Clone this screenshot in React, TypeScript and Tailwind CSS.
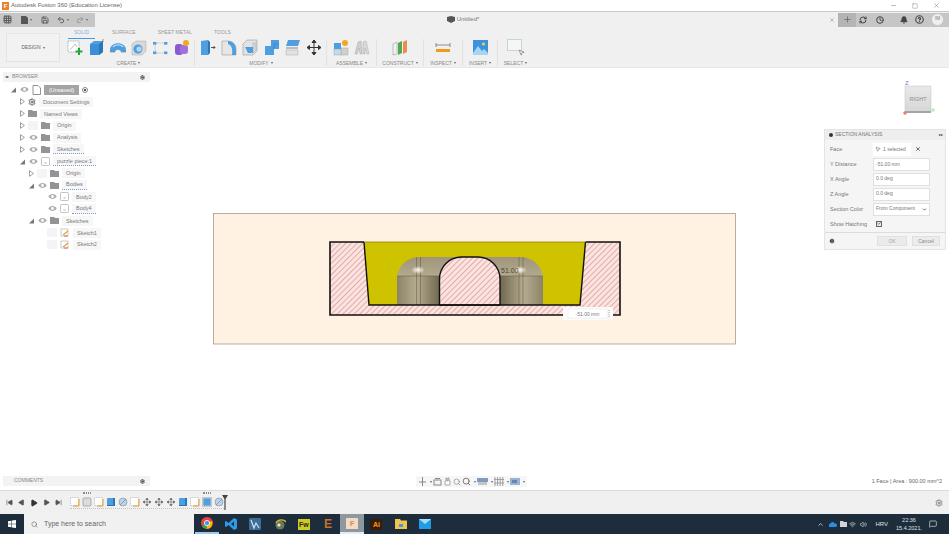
import { ChevronDown, Bell, HelpCircle, Grid3x3, Save, Undo2, Redo2, Plus, RefreshCw, Clock, Search, Wifi, Volume2, MessageSquare, ChevronUp, X, Minus, Square, Settings, SkipBack, SkipForward, Play, Info, MousePointer2, Check } from "lucide-react";

const BLUE = "#4f9fe0";

function Caret() {
  return <span className="ml-[2px] inline-block h-0 w-0 border-x-[1.5px] border-t-[2px] border-x-transparent border-t-[#666]" />;
}

function Glyph({ kind }: { kind: string }) {
  return (
    <svg width="16" height="17" viewBox="0 0 16 17" className="shrink-0">
      {kind === "sketch" && (
        <>
          <rect x="1" y="2" width="11" height="11" fill="#fff" stroke="#777" strokeWidth="0.6" strokeDasharray="1 0.7" />
          <path d="M3 11 L8 5 L10 8" fill="none" stroke="#999" strokeWidth="0.6" />
          <path d="M12 9v7M8.5 12.5h7" stroke="#22a83a" strokeWidth="2" />
        </>
      )}
      {kind === "extrude" && (
        <>
          <path d="M1 5 L5 2 L14 2 L14 13 L10 16 L1 16Z" fill={BLUE} />
          <path d="M1 5 L10 5 L10 16 L1 16Z" fill="#3b8fd6" />
          <path d="M10 5 L14 2 L14 13 L10 16Z" fill="#2a76b8" />
          <path d="M14 0v3" stroke="#555" strokeWidth="0.6" />
        </>
      )}
      {kind === "revolve" && (
        <>
          <path d="M0 11 C0 2 16 2 16 11 L16 13 L11 13 C10 10 6 10 5 13 L0 13Z" fill={BLUE} />
          <path d="M3 8 C5 5 11 5 13 8" fill="none" stroke="#d7ecfa" strokeWidth="1.2" />
          <path d="M0 13h5M11 13h5" stroke="#777" strokeWidth="0.6" />
        </>
      )}
      {kind === "hole" && (
        <>
          <path d="M1 5 L5 2 L15 2 L15 12 L11 16 L1 16Z" fill="#d8d8d8" stroke="#999" strokeWidth="0.4" />
          <circle cx="7" cy="10" r="4.5" fill={BLUE} />
          <circle cx="8" cy="10" r="2.6" fill="#b7d6ee" />
        </>
      )}
      {kind === "pattern" && (
        <>
          <path d="M3 4h10M3 14h10M3 4v10" stroke="#999" strokeWidth="0.6" strokeDasharray="1.2 1" fill="none" />
          <rect x="1" y="3" width="3.4" height="2.6" fill={BLUE} />
          <rect x="12" y="3" width="3.4" height="2.6" fill={BLUE} />
          <rect x="1" y="12.5" width="3.4" height="2.6" fill={BLUE} />
          <rect x="12" y="12.5" width="3.4" height="2.6" fill={BLUE} />
        </>
      )}
      {kind === "combine" && (
        <>
          <rect x="1" y="5" width="8" height="11" rx="3" fill="#8a5bd0" />
          <rect x="6" y="6" width="8" height="9" rx="3" fill="#a070dc" />
          <circle cx="12" cy="4" r="3" fill="#f5a623" />
        </>
      )}
      {kind === "press" && (
        <>
          <path d="M1 2 L8 1 L8 16 L1 16Z" fill={BLUE} />
          <path d="M8 1 L10 3 L10 14 L8 16Z" fill="#2a76b8" />
          <path d="M11 8.5h4M13.5 7l1.5 1.5-1.5 1.5" stroke="#444" strokeWidth="0.9" fill="none" />
        </>
      )}
      {kind === "fillet" && (
        <>
          <path d="M1 2 L7 2 C12 2 15 6 15 10 L15 16 L1 16Z" fill="#e6e6e6" stroke="#888" strokeWidth="0.5" />
          <path d="M7 2 C12 2 15 6 15 10 L15 16 L11 16 C12 9 10 6 7 5Z" fill={BLUE} />
        </>
      )}
      {kind === "chamfer" && (
        <>
          <path d="M1 5 L5 1 L15 1 L15 12 L11 16 L1 16Z" fill="#e2e2e2" stroke="#888" strokeWidth="0.5" />
          <path d="M3 8h8v6H6Z" fill={BLUE} />
          <path d="M11 4h3v7l-3 3Z" fill="#cfd8e0" stroke="#999" strokeWidth="0.4" />
        </>
      )}
      {kind === "combine2" && (
        <>
          <path d="M7 1h8v9h-5v6H1V7h6Z" fill={BLUE} />
          <path d="M10 10V5h5" fill="none" stroke="#2a76b8" strokeWidth="0.5" />
        </>
      )}
      {kind === "offset" && (
        <>
          <path d="M3 1h12l-2 6H1Z" fill={BLUE} />
          <path d="M1 8h12v2H1Z" fill="#bbb" />
          <path d="M1 11h12v5H1Z" fill="#e2e2e2" stroke="#999" strokeWidth="0.4" />
        </>
      )}
      {kind === "move" && (
        <path d="M8 1v15M1 8.5h14M8 1 6 3.5h4ZM8 16l-2-2.5h4ZM1 8.5 3.5 6.5v4ZM15 8.5l-2.5-2v4Z" stroke="#333" strokeWidth="1" fill="#333" />
      )}
      {kind === "assemble" && (
        <>
          <rect x="1" y="4" width="7" height="6" fill={BLUE} />
          <rect x="8" y="9" width="7" height="7" fill="#d0d0d0" stroke="#999" strokeWidth="0.4" />
          <rect x="1" y="10" width="7" height="6" fill="#c4d8e8" stroke="#999" strokeWidth="0.4" />
          <circle cx="12" cy="4" r="3" fill="#f5a623" />
        </>
      )}
      {kind === "joint" && (
        <>
          <path d="M1 15 L4 3 L7 2 L8 15 L6 15 L5 9 L3 15Z" fill="#cfcfcf" stroke="#999" strokeWidth="0.4" />
          <path d="M9 15 L9 3 L12 2 L15 15 L13 15 L11 9 L11 15Z" fill="#dadada" stroke="#999" strokeWidth="0.4" />
        </>
      )}
      {kind === "construct" && (
        <>
          <path d="M1 5 L5 3 L5 15 L1 16Z" fill="#f1f1f1" stroke="#888" strokeWidth="0.5" />
          <path d="M6 4 L10 2 L10 14 L6 16Z" fill="#55a84f" />
          <path d="M11 3 L15 1 L15 13 L11 15Z" fill="#ea8c55" />
        </>
      )}
      {kind === "inspect" && (
        <>
          <path d="M1 6h14" stroke="#666" strokeWidth="0.7" />
          <path d="M1 4v4M15 4v4" stroke="#666" strokeWidth="0.7" />
          <rect x="1" y="10" width="14" height="3" fill="#f09a1a" />
        </>
      )}
      {kind === "insert" && (
        <>
          <rect x="1" y="1" width="15" height="15" fill="#3b93dc" />
          <circle cx="11.5" cy="5" r="1.6" fill="#f4c95d" />
          <path d="M1 14 L6 7 L10 12 L12 10 L16 14 L16 16 L1 16Z" fill="#a9d4f2" />
        </>
      )}
    </svg>
  );
}

function RibbonGroup({ icons, label, wide, divider = true }: { icons: string[]; label: string; wide: string; divider?: boolean }) {
  return (
    <div className={`flex h-[27px] flex-col items-center justify-between ${wide} ${divider ? "border-r border-[#e2e2e2]" : ""}`}>
      <div className="flex gap-[5.3px]">
        {icons.map((k, i) => (
          <Glyph key={i} kind={k} />
        ))}
      </div>
      <div className="flex items-center text-[5px] leading-[6px] text-[#8a8a8a]">
        {label}
        <Caret />
      </div>
    </div>
  );
}

function EyeOn() {
  return (
    <svg width="9" height="7" viewBox="0 0 9 7" className="shrink-0">
      <path d="M0.3 3.5 C2.5 0.3 6.5 0.3 8.7 3.5 C6.5 6.7 2.5 6.7 0.3 3.5Z" fill="#adadad" />
      <circle cx="4.5" cy="3.5" r="1.4" fill="#fff" />
    </svg>
  );
}

function RowIcon({ kind }: { kind: string }) {
  if (kind === "gear") return <Settings size={8} strokeWidth={3} color="#666" className="shrink-0" />;
  if (kind === "folder")
    return (
      <svg width="9" height="7" viewBox="0 0 9 7" className="shrink-0">
        <path d="M0 0h4l1 1h4v6H0Z" fill="#949494" />
      </svg>
    );
  if (kind === "doc")
    return (
      <svg width="9" height="10" viewBox="0 0 9 10" className="shrink-0">
        <path d="M1 .5h5l2.5 2.5v6.5H1Z" fill="#fff" stroke="#777" strokeWidth="0.8" />
      </svg>
    );
  if (kind === "sketch")
    return (
      <svg width="10" height="9" viewBox="0 0 10 9" className="shrink-0">
        <rect x="1" y="1" width="7" height="7" fill="#fff" stroke="#aaa" strokeWidth="0.6" />
        <path d="M3 7 L8 3" stroke="#ee9a2e" strokeWidth="1.2" />
        <path d="M4 8h4" stroke="#dd4433" strokeWidth="0.8" />
      </svg>
    );
  return (
    <svg width="9" height="9" viewBox="0 0 9 9" className="shrink-0">
      <rect x=".5" y=".5" width="8" height="8" rx="1" fill="#fff" stroke="#aaa" strokeWidth="0.7" />
      <path d="M3.5 6h2" stroke="#888" strokeWidth="0.7" />
    </svg>
  );
}

type Row = { level: number; tri?: "open" | "filled"; eye?: "on" | "off"; icon: string; label: string; dotted?: boolean; root?: boolean };

const ROWS: Row[] = [
  { level: 11, tri: "filled", eye: "on", icon: "doc", label: "(Unsaved)", root: true },
  { level: 20, tri: "open", icon: "gear", label: "Document Settings" },
  { level: 20, tri: "open", icon: "folder", label: "Named Views" },
  { level: 20, tri: "open", eye: "off", icon: "folder", label: "Origin" },
  { level: 20, tri: "open", eye: "on", icon: "folder", label: "Analysis" },
  { level: 20, tri: "open", eye: "on", icon: "folder", label: "Sketches", dotted: true },
  { level: 20, tri: "filled", eye: "on", icon: "box", label: "puzzle piece:1", dotted: true },
  { level: 29, tri: "open", eye: "off", icon: "folder", label: "Origin" },
  { level: 29, tri: "filled", eye: "on", icon: "folder", label: "Bodies", dotted: true },
  { level: 47, eye: "on", icon: "box", label: "Body2" },
  { level: 47, eye: "on", icon: "box", label: "Body4", dotted: true },
  { level: 29, tri: "filled", eye: "on", icon: "folder", label: "Sketches" },
  { level: 47, eye: "off", icon: "sketch", label: "Sketch1" },
  { level: 47, eye: "off", icon: "sketch", label: "Sketch2" },
];

function TreeRow({ row }: { row: Row }) {
  return (
    <div className="flex h-[11.9px] items-center gap-[3px]" style={{ paddingLeft: row.level }}>
      {row.tri === "open" && (
        <svg width="5" height="7" viewBox="0 0 5 7" className="shrink-0">
          <path d="M.5.7 4.4 3.5.5 6.3Z" fill="#fff" stroke="#777" strokeWidth="0.7" />
        </svg>
      )}
      {row.tri === "filled" && (
        <svg width="5" height="7" viewBox="0 0 5 7" className="shrink-0">
          <path d="M5 1.5V6.5H0Z" fill="#777" />
        </svg>
      )}
      {row.eye === "on" && (
        <span className="flex w-[10px] shrink-0 justify-center">
          <EyeOn />
        </span>
      )}
      {row.eye === "off" && <span className="h-[9px] w-[10px] shrink-0 bg-[#f4f4f4]" />}
      <RowIcon kind={row.icon} />
      <span
        className={`flex h-[10px] items-center whitespace-nowrap px-[4px] text-[5.5px] ${
          row.root ? "bg-[#a4a4a4] px-[5px] text-white" : "bg-[#f7f7f7] text-[#777]"
        } ${row.dotted ? "border-b border-dotted border-[#7f9bdc]" : ""}`}
      >
        {row.label}
      </span>
      {row.root && <span className="h-[6px] w-[6px] rounded-full border border-[#888] bg-[radial-gradient(circle,#555_30%,#fff_35%)]" />}
    </div>
  );
}

function FieldRow({ label, children }: { label: string; children: React.ReactNode }) {
  return (
    <div className="flex h-[14.9px] items-center">
      <span className="w-[43px] whitespace-nowrap text-[5.5px] text-[#777]">{label}</span>
      {children}
    </div>
  );
}

function Input({ value }: { value: string }) {
  return <div className="flex h-[13px] w-[57px] items-center border border-[#e0e0e0] bg-white px-[2px] text-[5px] text-[#777]">{value}</div>;
}

function Model() {
  return (
    <svg viewBox="213 213 523 132" className="h-[132px] w-[523px]">
      <defs>
        <pattern id="hatch" width="4" height="4" patternUnits="userSpaceOnUse" patternTransform="rotate(-45)">
          <rect width="4" height="4" fill="#fbe4df" />
          <rect width="4" height="1" fill="#e3abab" />
        </pattern>
        <linearGradient id="metalL" x1="0" x2="1" y1="0" y2="0">
          <stop offset="0" stopColor="#8d8468" />
          <stop offset="0.45" stopColor="#b5ab90" />
          <stop offset="1" stopColor="#6f674f" />
        </linearGradient>
        <linearGradient id="metalR" x1="0" x2="1" y1="0" y2="0">
          <stop offset="0" stopColor="#6f674f" />
          <stop offset="0.55" stopColor="#b5ab90" />
          <stop offset="1" stopColor="#8d8468" />
        </linearGradient>
        <linearGradient id="metalT" x1="0" x2="0" y1="0" y2="1">
          <stop offset="0" stopColor="#a0957a" />
          <stop offset="1" stopColor="#cfc7ae" />
        </linearGradient>
        <radialGradient id="shine">
          <stop offset="0" stopColor="#fffdf0" />
          <stop offset="1" stopColor="#fffdf0" stopOpacity="0" />
        </radialGradient>
      </defs>
      <rect x="213.5" y="213.5" width="522" height="130.5" fill="#fff2e2" stroke="#a89c90" strokeWidth="0.8" />
      <path d="M330 242 H364 L369 305 H580 L585.5 242 H620 V315 H330 Z" fill="url(#hatch)" />
      <path d="M364 242 H585.5 L580 305 H369 Z" fill="#cfc300" />
      <path d="M397 305 V279 A22 22 0 0 1 419 257 H521 A22 22 0 0 1 543 279 V305 Z" fill="url(#metalT)" />
      <rect x="397" y="276" width="43" height="29" fill="url(#metalL)" />
      <rect x="500" y="276" width="43" height="29" fill="url(#metalR)" />
      <path d="M397 276 H440 M500 276 H543 M416.5 257 V305 M420.5 257 V305 M519 257 V305 M523 257 V305" stroke="#5c5440" strokeWidth="0.5" />
      <ellipse cx="418" cy="270" rx="7" ry="4" fill="url(#shine)" />
      <ellipse cx="520" cy="270" rx="7" ry="4" fill="url(#shine)" />
      <text x="501" y="273" fontSize="7" fill="#4a4636" fontFamily="Liberation Sans">51.00</text>
      <path d="M439.5 305 V279 A22 22 0 0 1 461.5 257 H478 A22 22 0 0 1 500 279 V305 Z" fill="url(#hatch)" stroke="#111" strokeWidth="1.4" />
      <path d="M364 242 L369 305 H580 L585.5 242" fill="none" stroke="#111" strokeWidth="1.4" />
      <path d="M364 242 H330 V315 H620 V242 H585.5" fill="none" stroke="#111" strokeWidth="1.6" />
      <path d="M364 242 H585.5" stroke="#7d7600" strokeWidth="0.7" />
      <rect x="563" y="307" width="50" height="13" fill="#fbfbfb" />
      <rect x="568" y="309" width="39" height="9" fill="#fff" stroke="#e4e4e4" strokeWidth="0.5" />
      <text x="587.5" y="315.5" fontSize="5" fill="#777" textAnchor="middle" fontFamily="Liberation Sans">-51.00 mm</text>
      <path d="M609 310v7" stroke="#888" strokeWidth="0.8" strokeDasharray="1 1" />
    </svg>
  );
}

function ViewCube() {
  return (
    <svg width="40" height="38" viewBox="0 0 40 38">
      <defs>
        <linearGradient id="cube" x1="0" x2="0" y1="0" y2="1">
          <stop offset="0" stopColor="#e9e9e9" />
          <stop offset="1" stopColor="#d6d6d6" />
        </linearGradient>
      </defs>
      <text x="3" y="5" fontSize="6" fill="#7a7ae8" fontFamily="Liberation Sans">Z</text>
      <rect x="3" y="6" width="26" height="26" fill="url(#cube)" stroke="#c4c4c4" strokeWidth="0.5" />
      <rect x="3" y="31" width="26" height="2" fill="#a4a4a4" />
      <text x="16" y="21" fontSize="5.5" fill="#8f8f8f" textAnchor="middle" fontFamily="Liberation Sans">RIGHT</text>
      <circle cx="3" cy="33" r="1.8" fill="#f47a7a" />
      <circle cx="31" cy="30" r="1.8" fill="#b4ecb4" />
    </svg>
  );
}

function TimelineItem({ kind }: { kind: string }) {
  if (kind === "sketch")
    return (
      <svg width="10" height="10" viewBox="0 0 10 10">
        <rect x=".5" y=".5" width="8" height="8" fill="#fff" stroke="#999" strokeWidth="0.5" strokeDasharray="1 .6" />
        <path d="M9 2v7H3" fill="none" stroke="#ee9a2e" strokeWidth="1" />
      </svg>
    );
  if (kind === "gray")
    return (
      <svg width="10" height="10" viewBox="0 0 10 10">
        <rect x="1" y="1" width="8" height="8" rx="1" fill="#dcdcdc" stroke="#888" strokeWidth="0.6" />
      </svg>
    );
  if (kind === "solid")
    return (
      <svg width="10" height="10" viewBox="0 0 10 10">
        <rect x="1" y="1" width="8" height="8" rx="1" fill={BLUE} />
        <path d="M7 1h2v8H1V8h6Z" fill="#2a76b8" />
      </svg>
    );
  if (kind === "round")
    return (
      <svg width="10" height="10" viewBox="0 0 10 10">
        <circle cx="5" cy="5" r="4" fill="#b9d6ee" stroke="#777" strokeWidth="0.5" />
        <path d="M2 8 8 2" stroke="#777" strokeWidth="0.6" />
      </svg>
    );
  if (kind === "move")
    return (
      <svg width="10" height="10" viewBox="0 0 10 10">
        <path d="M5 1v8M1 5h8M5 1 3.8 2.6h2.4ZM5 9 3.8 7.4h2.4ZM1 5l1.6-1.2v2.4ZM9 5 7.4 3.8v2.4Z" stroke="#666" strokeWidth="0.6" fill="#666" />
      </svg>
    );
  return (
    <svg width="10" height="10" viewBox="0 0 10 10">
      <rect width="10" height="10" fill="#c2c8ce" />
      <rect x="1.5" y="1.5" width="7" height="7" fill={BLUE} />
    </svg>
  );
}

const TIMELINE = ["sketch", "gray", "sketch", "solid", "round", "sketch", "move", "move", "move", "solid", "sketch", "selected", "round"];

function NavIcons() {
  return (
    <div className="flex h-[11px] items-center gap-[1px] bg-[#f6f6f6] px-[2px]">
      <svg width="9" height="9" viewBox="0 0 9 9"><path d="M4.5 0v9M1 5h7" stroke="#888" /></svg>
      <Caret />
      <svg width="9" height="9" viewBox="0 0 9 9"><rect x="1" y="3" width="7" height="5" fill="none" stroke="#888" /><path d="M2 1.5h5" stroke="#888" /></svg>
      <svg width="9" height="9" viewBox="0 0 9 9"><path d="M2 8V4h1V1h1v3h1V1h1v3h1v4Z" fill="#fff" stroke="#888" strokeWidth="0.7" /></svg>
      <Search size={8} color="#888" />
      <Search size={9} color="#555" />
      <Caret />
      <svg width="11" height="9" viewBox="0 0 11 9"><rect y="1" width="11" height="4" fill="#7e9cc2" /><rect x="1" y="5" width="9" height="3" fill="#c4c4c4" /></svg>
      <Caret />
      <svg width="10" height="9" viewBox="0 0 10 9"><path d="M1 0v9M3.6 0v9M6.2 0v9M8.8 0v9M0 2.5h10M0 6h10" stroke="#999" strokeWidth="0.9" /></svg>
      <Caret />
      <svg width="10" height="9" viewBox="0 0 10 9"><rect y="1" width="10" height="7" fill="#9ab2d4" /><rect x="2" y="3" width="5" height="3" fill="#5f84b8" /></svg>
      <Caret />
    </div>
  );
}

function TaskIcon({ children, state }: { children: React.ReactNode; state?: "open" | "active" }) {
  const extra = state === "active" ? "border-b-2 border-[#e6edf2] bg-[#8f989f]" : state === "open" ? "border-b-2 border-[#9fc9ea]" : "";
  return <div className={`flex h-[20px] w-[24.2px] shrink-0 items-center justify-center ${extra}`}>{children}</div>;
}

function AppBadge({ text, bg, fg }: { text: string; bg: string; fg: string }) {
  return <div className="flex h-[11px] w-[12px] items-center justify-center text-[7px] font-bold leading-none" style={{ background: bg, color: fg }}>{text}</div>;
}

export default function App() {
  return (
    <div className="flex h-[534px] w-[949px] flex-col overflow-hidden bg-white font-['Liberation_Sans',sans-serif]">
      {/* title bar */}
      <div className="flex h-[12px] shrink-0 items-center border-b border-[#c8c8c8] bg-white pl-[2px]">
        <div className="mr-[2px] flex h-[8px] w-[7px] items-center justify-center bg-[#e8812c] text-[6px] font-bold leading-none text-white">F</div>
        <span className="text-[6px] text-[#666]">Autodesk Fusion 360 (Education License)</span>
        <div className="ml-auto mr-[9px] flex items-center gap-[15px] text-[#888]">
          <Minus size={7} />
          <Square size={6} />
          <X size={7} />
        </div>
      </div>

      {/* ribbon */}
      <div className="h-[56px] shrink-0 border-b border-[#e8e8e8] bg-[#f0f0f0]">
        <div className="flex h-[15px] items-center">
          <div className="flex h-[14px] w-[95px] items-center bg-[#c6c6c6] pl-[3px] text-[#555]">
            <Grid3x3 size={9} strokeWidth={2.6} />
            <svg width="7" height="8" viewBox="0 0 7 8" className="ml-[9px]"><path d="M0 0h5l2 2v6H0Z" fill="#555" /></svg>
            <Caret />
            <Save size={8} strokeWidth={2.6} className="ml-[9px]" />
            <Undo2 size={8} strokeWidth={2.6} className="ml-[8px]" />
            <Caret />
            <Redo2 size={8} strokeWidth={2.2} color="#888" className="ml-[7px]" />
            <Caret />
          </div>
          <div className="flex flex-1 items-center justify-center pl-[2px] text-[6px] text-[#777]">
            <svg width="8" height="7" viewBox="0 0 8 7" className="mr-[2px]"><path d="M0 1 4 0l4 1v4L4 7 0 5Z" fill="#555" /></svg>
            Untitled*
          </div>
          <X size={6} color="#999" className="mr-[3px]" strokeWidth={2.5} />
          <div className="flex h-[14px] w-[111px] items-center bg-[#c6c6c6] text-[#444]">
            <div className="flex h-full w-[18px] items-center justify-center bg-[#b4b4b4]">
              <Plus size={9} strokeWidth={2} color="#666" />
            </div>
            <RefreshCw size={8} strokeWidth={3} className="ml-[3px]" />
            <Clock size={8} strokeWidth={3} className="ml-[9px]" />
            <Bell size={8} strokeWidth={3} fill="#444" className="ml-[16px]" />
            <HelpCircle size={9} strokeWidth={3} className="ml-[7px]" />
            <div className="ml-[8px] flex h-[11px] w-[11px] items-center justify-center rounded-full bg-[#efefef] text-[4.5px] text-[#777]">IM</div>
          </div>
        </div>

        <div className="flex">
          <div className="ml-[6px] mt-[6px] flex h-[29px] w-[54px] items-center justify-center border border-[#e4e4e4] bg-[#f2f2f2] text-[5px] text-[#666]">
            DESIGN
            <Caret />
          </div>
          <div className="ml-[8px] flex flex-col">
            <div className="flex h-[12px] items-start pt-[2px] text-[5px] leading-[7px] text-[#999]">
              <span className="flex h-[10px] w-[27px] justify-center border-b border-[#3f9be6] text-[#7fb0dc]">SOLID</span>
              <span className="ml-[17px]">SURFACE</span>
              <span className="ml-[22px]">SHEET METAL</span>
              <span className="ml-[22px]">TOOLS</span>
            </div>
            <div className="flex">
              <RibbonGroup wide="w-[127px] pr-[5px]" icons={["sketch", "extrude", "revolve", "hole", "pattern", "combine"]} label="CREATE" />
              <RibbonGroup wide="w-[132px] pl-[5px] pr-[4px]" icons={["press", "fillet", "chamfer", "combine2", "offset", "move"]} label="MODIFY" />
              <RibbonGroup wide="w-[50px]" icons={["assemble", "joint"]} label="ASSEMBLE" />
              <RibbonGroup wide="w-[47px]" icons={["construct"]} label="CONSTRUCT" />
              <RibbonGroup wide="w-[39px]" icons={["inspect"]} label="INSPECT" />
              <RibbonGroup wide="w-[35px]" icons={["insert"]} label="INSERT" />
              <div className="flex h-[27px] w-[35px] flex-col items-center justify-between">
                <div className="relative h-[17px] w-[18px]">
                  <div className="h-[12px] w-[15px] border border-[#c4d6d2] bg-[#f4f7f6]" />
                  <MousePointer2 size={7} color="#666" className="absolute bottom-0 right-0" />
                </div>
                <div className="flex items-center text-[5px] leading-[6px] text-[#8a8a8a]">
                  SELECT
                  <Caret />
                </div>
              </div>
            </div>
          </div>
        </div>
      </div>

      {/* canvas */}
      <div className="relative min-h-0 flex-1 bg-white">
        <div className="absolute left-[3px] top-[4px] w-[147px]">
          <div className="flex h-[10px] items-center bg-[#f3f3f3] px-[2px] text-[5px] text-[#888]">
            <span className="mr-[3px] text-[4px] text-[#444]">◂▸</span>
            BROWSER
            <Settings size={5} strokeWidth={4} color="#444" className="ml-auto mr-[3px]" />
          </div>
        </div>
        <div className="absolute left-0 top-[16px] w-[150px]">
          {ROWS.map((r, i) => (
            <TreeRow key={i} row={r} />
          ))}
        </div>

        <div className="absolute left-[213px] top-[145px]">
          <Model />
        </div>

        <div className="absolute left-[902px] top-[12px]">
          <ViewCube />
        </div>

        {/* section analysis dialog */}
        <div className="absolute left-[824px] top-[61px] w-[122px] border border-[#e4e4e4] bg-[#f5f5f5]">
          <div className="flex h-[10px] items-center bg-[#eeeeee] pl-[4px] pr-[2px] text-[5px] text-[#777]">
            <span className="mr-[2px] h-[4px] w-[4px] rounded-full bg-[#333]" />
            SECTION ANALYSIS
            <span className="ml-auto text-[4px] text-[#333]">▸▸</span>
          </div>
          <div className="px-[5px] pt-[2px]">
            <FieldRow label="Face">
              <div className="flex h-[13px] w-[38px] items-center gap-[2px] bg-white px-[2px] text-[5px] text-[#777]">
                <MousePointer2 size={6} color="#666" />1 selected
              </div>
              <X size={6} strokeWidth={3} color="#444" className="ml-[4px]" />
            </FieldRow>
            <FieldRow label="Y Distance"><Input value="-51.00 mm" /></FieldRow>
            <FieldRow label="X Angle"><Input value="0.0 deg" /></FieldRow>
            <FieldRow label="Z Angle"><Input value="0.0 deg" /></FieldRow>
            <FieldRow label="Section Color">
              <div className="flex h-[13px] w-[57px] items-center justify-between border border-[#e0e0e0] bg-white px-[2px] text-[5px] text-[#777]">
                From Component
                <ChevronDown size={5} strokeWidth={4} color="#555" />
              </div>
            </FieldRow>
            <FieldRow label="Show Hatching">
              <div className="ml-[3px] flex h-[6px] w-[6px] items-center justify-center border border-[#666] bg-[#e8e8e8]">
                <Check size={5} strokeWidth={4} color="#444" />
              </div>
            </FieldRow>
          </div>
          <div className="mt-[1px] flex h-[17px] items-center border-t border-[#dcdcdc] px-[4px]">
            <Info size={6} strokeWidth={3} fill="#222" color="#fff" />
            <div className="ml-auto flex h-[10px] w-[30px] items-center justify-center border border-[#e0e0e0] bg-[#ebebeb] text-[5px] text-[#aaa]">OK</div>
            <div className="ml-[5px] mr-[1px] flex h-[10px] w-[28px] items-center justify-center border border-[#e0e0e0] bg-[#ebebeb] text-[5px] text-[#888]">Cancel</div>
          </div>
        </div>

        {/* bottom overlays */}
        <div className="absolute bottom-[4px] left-[3px] flex h-[10px] w-[147px] items-center bg-[#f3f3f3] pl-[11px] pr-[5px] text-[5px] text-[#888]">
          COMMENTS
          <Settings size={5} strokeWidth={4} color="#444" className="ml-auto" />
        </div>
        <div className="absolute bottom-[3px] left-[416px]">
          <NavIcons />
        </div>
        <div className="absolute bottom-[5px] right-[7px] text-[5.5px] text-[#666]">1 Face | Area : 900.00 mm^2</div>
      </div>

      {/* timeline */}
      <div className="flex h-[24px] shrink-0 items-center border-t border-[#dcdcdc] bg-[#f0f0f0] pl-[6px] text-[#555]">
        <div className="flex w-[64px] items-center gap-[5px]">
          <SkipBack size={7} fill="#555" />
          <Play size={7} fill="#555" className="rotate-180" />
          <Play size={8} fill="#333" color="#333" />
          <Play size={7} fill="#555" />
          <SkipForward size={7} fill="#555" />
        </div>
        <div className="flex items-center gap-[2px] border-b border-dotted border-[#c4c4c4] pb-[1px]">
          {TIMELINE.map((k, i) => (
            <div key={i} className="relative">
              {(i === 1 || i === 11) && <span className="absolute -top-[5px] left-[1px] h-[2px] w-[8px] border-y border-dotted border-[#888]" />}
              <TimelineItem kind={k} />
            </div>
          ))}
        </div>
        <svg width="6" height="15" viewBox="0 0 6 15" className="-ml-[2px]"><path d="M0 0h6L3.6 4v11H2.4V4Z" fill="#444" /></svg>
        <Settings size={8} strokeWidth={3} color="#888" className="ml-auto mr-[6px]" />
      </div>

      {/* taskbar */}
      <div className="flex h-[20px] shrink-0 items-center bg-[#1e2d3b] text-white">
        <div className="flex h-full w-[24px] items-center justify-center">
          <svg width="8" height="8" viewBox="0 0 8 8"><path d="M0 1.2 3.4.7v3H0ZM3.9.6 8 0v3.7H3.9ZM0 4.2h3.4v3L0 6.8ZM3.9 4.2H8V8l-4.1-.6Z" fill="#fff" /></svg>
        </div>
        <div className="flex h-full w-[170px] items-center bg-[#f1f1f1] pl-[7px] text-[7px] text-[#666]">
          <Search size={7} color="#666" className="mr-[6px]" />
          Type here to search
        </div>
        <div className="ml-[1px] flex">
          <TaskIcon state="open">
            <svg width="12" height="12" viewBox="0 0 12 12"><circle cx="6" cy="6" r="6" fill="#e5453a" /><path d="M6 6 1 9a6 6 0 0 0 5 3Z" fill="#34a853" /><path d="M6 6l5-2a6 6 0 0 1-5 8Z" fill="#fbbc04" /><circle cx="6" cy="6" r="2.6" fill="#4a8de8" stroke="#fff" strokeWidth="0.8" /></svg>
          </TaskIcon>
          <TaskIcon>
            <svg width="12" height="12" viewBox="0 0 12 12"><path d="M9 0 12 1.5v9L9 12 3.5 7 1 9 0 8.4V3.6L1 3l2.5 2ZM9 3.4 6 6l3 2.6Z" fill="#2a9ce8" /></svg>
          </TaskIcon>
          <TaskIcon>
            <svg width="12" height="12" viewBox="0 0 12 12"><rect width="12" height="12" rx="1" fill="#3d6d96" /><path d="M2 2l3 8 2-5 3 5" stroke="#cfe2f0" strokeWidth="1.2" fill="none" /></svg>
          </TaskIcon>
          <TaskIcon>
            <svg width="12" height="11" viewBox="0 0 12 11"><circle cx="6" cy="6" r="4.5" fill="#6b7a54" /><path d="M2 4C4 0 10 0 12 3" stroke="#d9b53f" strokeWidth="1.4" fill="none" /><circle cx="5" cy="6" r="1.6" fill="#e6e6e6" /></svg>
          </TaskIcon>
          <TaskIcon><AppBadge text="Fw" bg="#cfc92a" fg="#2c2c10" /></TaskIcon>
          <TaskIcon><span className="text-[12px] font-bold leading-none text-[#c9702c]">E</span></TaskIcon>
          <TaskIcon state="active"><AppBadge text="F" bg="#f2dcc6" fg="#d98a46" /></TaskIcon>
          <TaskIcon><AppBadge text="Ai" bg="#3a1d08" fg="#f59b23" /></TaskIcon>
          <TaskIcon>
            <svg width="12" height="10" viewBox="0 0 12 10"><path d="M0 0h5l1 1.5h6V10H0Z" fill="#f2c44e" /><rect x="4" y="5" width="4" height="3" fill="#3d9be0" /></svg>
          </TaskIcon>
          <TaskIcon>
            <svg width="12" height="10" viewBox="0 0 12 10"><rect width="12" height="10" fill="#1f9be8" /><path d="M0 0 6 5l6-5" fill="#a9dcf8" /></svg>
          </TaskIcon>
        </div>
        <div className="ml-auto flex items-center pr-[12px] text-[#dfe3e6]">
          <ChevronUp size={7} strokeWidth={2.5} />
          <svg width="8" height="5" viewBox="0 0 8 5" className="ml-[5px]"><path d="M1 5a1.5 1.5 0 0 1 0-3 2.5 2.5 0 0 1 4.6-.6A1.8 1.8 0 0 1 8 3.2 1.8 1.8 0 0 1 6.5 5Z" fill="#2b8fe0" /></svg>
          <svg width="7" height="6" viewBox="0 0 7 6" className="ml-[3px]"><path d="M0 0h3l1 1h3v5H0Z" fill="#cfd5da" /></svg>
          <Wifi size={7} className="ml-[2px]" />
          <Volume2 size={7} className="ml-[4px]" />
          <span className="ml-[8px] text-[6px]">HRV</span>
          <div className="ml-[8px] flex flex-col items-center text-[5.5px] leading-[8px]">
            <span>22:36</span>
            <span>15.4.2021.</span>
          </div>
          <MessageSquare size={8} className="ml-[7px]" />
        </div>
      </div>
    </div>
  );
}
